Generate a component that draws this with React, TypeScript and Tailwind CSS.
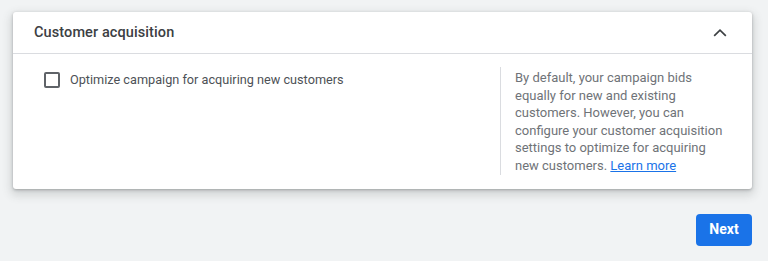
const helpText =
  "By default, your campaign bids equally for new and existing customers. However, you can configure your customer acquisition settings to optimize for acquiring new customers.";

export default function App() {
  return (
    <div className="h-[261px] w-[768px] overflow-hidden bg-[#f1f3f4] font-['Roboto',sans-serif]">
      <div className="pl-[13px] pr-[16px] pt-[12px]">
        <section className="rounded-[3px] bg-white shadow-[0_1px_3px_rgba(60,64,67,0.35),0_4px_10px_2px_rgba(60,64,67,0.18)]">
          <header className="flex h-[42px] items-center justify-between border-b border-[#dadce0] pl-[21px] pr-[22px]">
            <h2 className="text-[14.5px] font-medium tracking-[0.1px] text-[#3c4043]">
              Customer acquisition
            </h2>
            <svg
              width="20"
              height="20"
              viewBox="0 0 24 24"
              fill="none"
              stroke="#3c4043"
              strokeWidth="2"
            >
              <path d="M5 15.5 12 8.5l7 7" />
            </svg>
          </header>
          <div className="flex pb-[14px] pt-[13px]">
            <label className="flex flex-1 items-start gap-[10px] pl-[31px] pt-[5px]">
              <span className="h-[16px] w-[16px] shrink-0 rounded-[2px] border-2 border-[#5f6368]" />
              <span className="text-[12.7px] leading-[16px] text-[#4d5156]">
                Optimize campaign for acquiring new customers
              </span>
            </label>
            <div className="w-[252px] border-l border-[#dadce0] pl-[14px] pr-[26px] pt-[2px]">
              <p className="text-[13px] leading-[17.6px] text-[#6f7378]">
                {helpText}{" "}
                <a href="#" className="text-[#1a73e8] underline">
                  Learn more
                </a>
              </p>
            </div>
          </div>
        </section>
        <div className="flex justify-end pt-[25px]">
          <button className="h-[32px] w-[56px] rounded-[4px] bg-[#1a73e8] text-[14px] font-bold text-white">
            Next
          </button>
        </div>
      </div>
    </div>
  );
}
